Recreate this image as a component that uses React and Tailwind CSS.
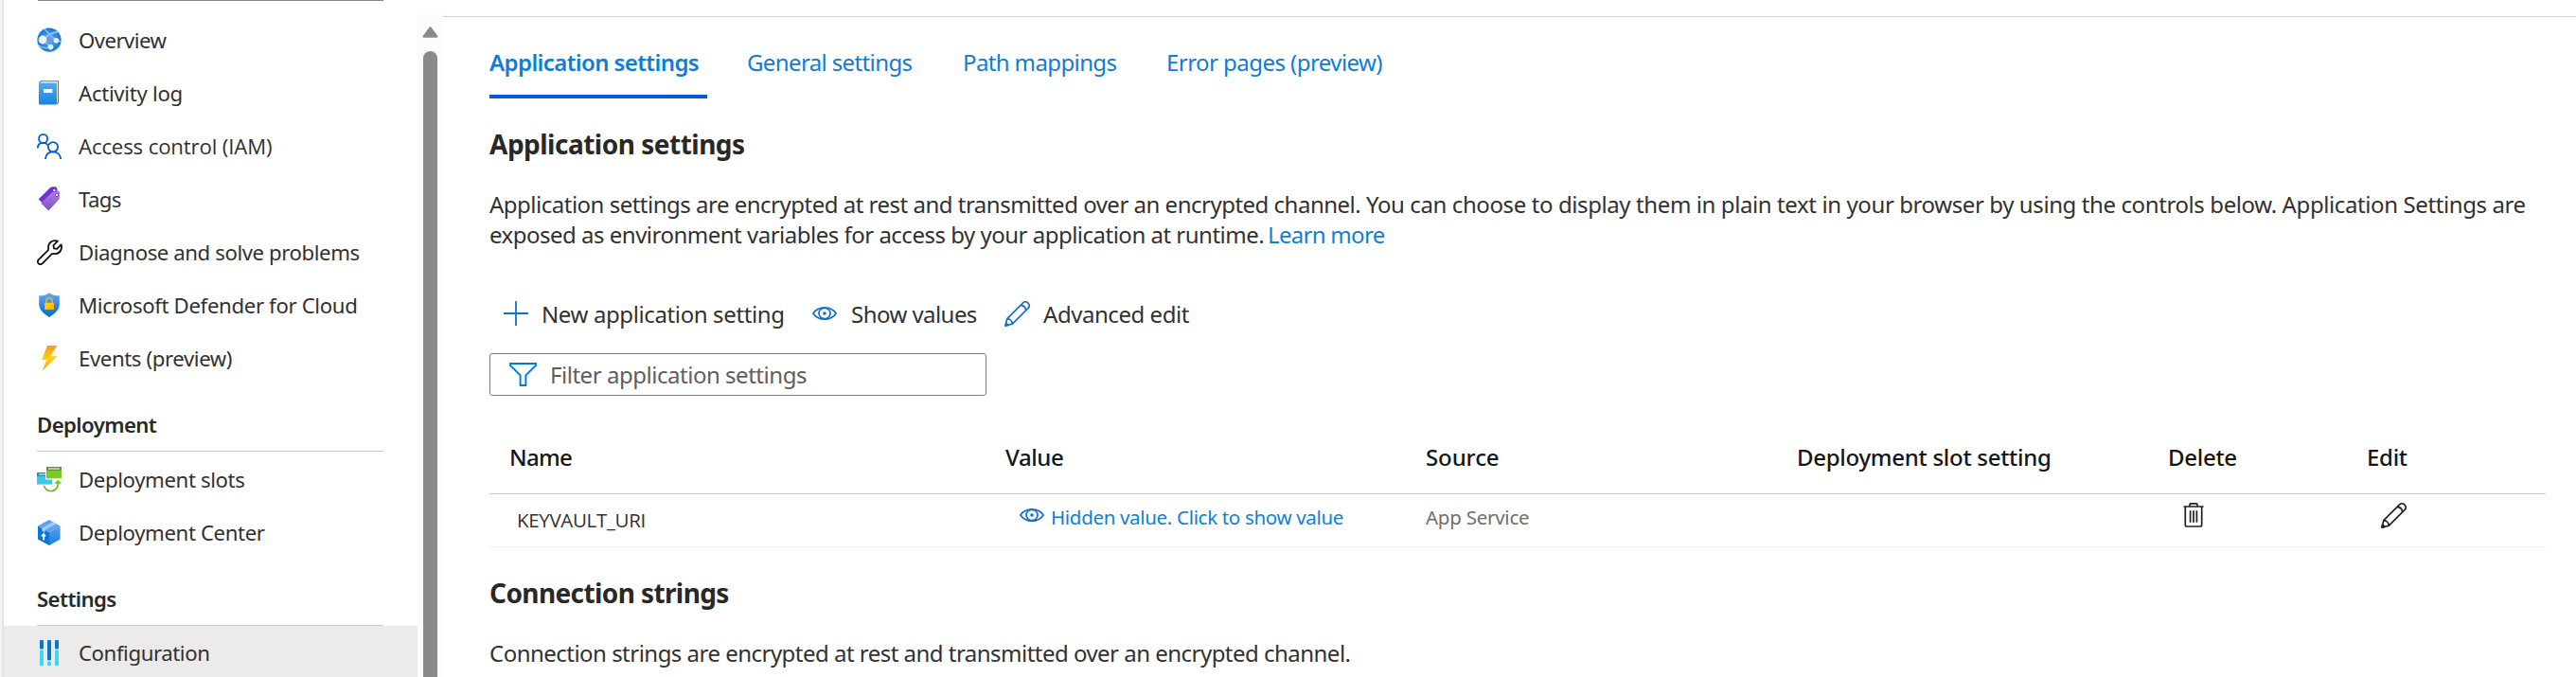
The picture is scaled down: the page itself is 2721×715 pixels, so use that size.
import { Fragment } from "react";

function GlobeIcon() {
  return (
    <svg width="26" height="26" viewBox="0 0 26 26">
      <defs>
        <radialGradient id="globe" cx="0.5" cy="0.5" r="0.55">
          <stop offset="0.2" stopColor="#5ea0ef" />
          <stop offset="1" stopColor="#0078d4" />
        </radialGradient>
        <clipPath id="globeClip"><circle cx="13" cy="13.2" r="12.6" /></clipPath>
      </defs>
      <circle cx="13" cy="13.2" r="12.6" fill="url(#globe)" />
      <g clipPath="url(#globeClip)" stroke="#8fbdf4" strokeWidth="1.4" fill="none">
        <path d="M8 1.5 L13.5 7.5 L20.5 14 L25 15" />
        <path d="M6 13 C10 9 15 6 22 4.5" strokeWidth="2.2" />
        <path d="M6 13 L14.5 20.5" />
        <path d="M2 19 C6 22 10 22.5 14.5 20.5" />
      </g>
      <circle cx="6" cy="13" r="4.4" fill="#f2f2f2" />
      <circle cx="20.4" cy="13.8" r="2.8" fill="#f2f2f2" />
      <circle cx="14.5" cy="20.6" r="2.8" fill="#f2f2f2" />
    </svg>
  );
}

function BookIcon() {
  return (
    <svg width="26" height="26" viewBox="0 0 26 26">
      <defs>
        <linearGradient id="book" x1="0" y1="0" x2="0" y2="1">
          <stop offset="0" stopColor="#50aaf0" />
          <stop offset="1" stopColor="#1585dc" />
        </linearGradient>
      </defs>
      <path d="M2.5 2.5 L4.5 0.8 H22.5 V23.5 L20.5 25.2" fill="#fff" stroke="#2a7fc4" strokeWidth="1.1" />
      <rect x="2" y="2.6" width="19" height="23" rx="1" fill="url(#book)" />
      <rect x="7" y="9" width="9.4" height="4" fill="#fff" />
    </svg>
  );
}

function PeopleIcon() {
  return (
    <svg width="26" height="27" viewBox="0 0 26 27" fill="none" stroke="#015cda" strokeWidth="1.8">
      <circle cx="6.6" cy="5.4" r="4.5" />
      <path d="M0.8 15.5 C0.8 11.8 3.3 9.9 6.6 9.9 C9 9.9 10.6 10.9 11.8 12.6" />
      <circle cx="17" cy="14.2" r="5.1" />
      <path d="M8.9 27 C9.4 22.2 12.6 19.4 17 19.4 C21.4 19.4 24.8 22.2 25.2 27" />
    </svg>
  );
}

function TagIcon() {
  return (
    <svg width="26" height="26" viewBox="0 0 26 26">
      <defs>
        <linearGradient id="tag" x1="0" y1="0" x2="0" y2="1">
          <stop offset="0" stopColor="#b77ee6" />
          <stop offset="1" stopColor="#7a50bb" />
        </linearGradient>
      </defs>
      <path d="M2 13 L14 1.2 Q15 0.4 16.5 0.3 L19.5 0.2 Q21.3 0.5 21.5 3 L21.5 5 L6 17.5 L2 13.8 Z" fill="#7430d8" />
      <path d="M4.6 17 L17.2 5 Q18.2 4.2 20 4.2 L22.5 4.4 Q24 4.6 24 6.2 L23.8 11.6 Q23.7 13.4 22.5 14.5 L12.2 25.4 L4.2 17.6 Z" fill="url(#tag)" />
      <circle cx="18.3" cy="4" r="1.7" fill="#fff" stroke="#5b1bb0" strokeWidth="0.9" />
      <circle cx="21" cy="8.9" r="1.7" fill="#fff" stroke="#6b3db5" strokeWidth="0.9" />
    </svg>
  );
}

function WrenchIcon() {
  return (
    <svg width="27" height="27" viewBox="1.4 1.4 21.2 21.2" fill="none" stroke="#111" strokeWidth="1.4" strokeLinejoin="round">
      <path d="M18.6 2.7 L15.1 6.2 L15.5 8.7 L18 9.1 L21.4 5.6 C22.6 8.6 21 12.9 16.9 13.2 C15.6 13.3 14.4 12.7 13.4 13.7 L6.1 21.2 C4.9 22.3 3.2 22.1 2.5 21.1 C1.8 20 2 18.8 2.9 17.9 L10.4 10.6 C11.4 9.6 10.7 8.5 10.9 7.1 C11.3 3.2 15.3 1.3 18.6 2.7 Z" />
    </svg>
  );
}

function ShieldIcon() {
  return (
    <svg width="26" height="26" viewBox="0 0 26 26">
      <defs>
        <linearGradient id="shield" x1="0" y1="0" x2="0" y2="1">
          <stop offset="0.1" stopColor="#5ea0ef" />
          <stop offset="0.9" stopColor="#0074d8" />
        </linearGradient>
      </defs>
      <path d="M13 0.2 C16 2.6 19.5 3.3 23.8 3.3 V12 C23.8 19 18 22.6 13 26 C8 22.6 2.2 19 2.2 12 V3.3 C6.5 3.3 10 2.6 13 0.2 Z" fill="url(#shield)" />
      <path d="M9.8 11 V9.4 A3.2 3.6 0 0 1 16.2 9.4 V11" fill="none" stroke="#e8b21a" strokeWidth="1.7" />
      <rect x="8.2" y="10.8" width="9.8" height="7.2" rx="0.8" fill="#ffca10" />
      <path d="M8.6 18 L18 10.9 V17.2 Q18 18 17.2 18 Z" fill="#f5b70b" />
    </svg>
  );
}

function BoltIcon() {
  return (
    <svg width="26" height="27" viewBox="0 0 26 27">
      <defs>
        <linearGradient id="bolt" x1="0" y1="0" x2="0" y2="1">
          <stop offset="0" stopColor="#fc9a1e" />
          <stop offset="0.5" stopColor="#ffd20a" />
          <stop offset="1" stopColor="#fba11d" />
        </linearGradient>
      </defs>
      <path d="M11 0 H21.4 L14.2 11.2 H21.4 L5.4 27 L10.2 15 H5 Z" fill="url(#bolt)" />
    </svg>
  );
}

function SlotsIcon() {
  return (
    <svg width="26" height="27" viewBox="0 0 26 27">
      <rect x="0" y="6" width="16" height="12.6" fill="#36cbe8" />
      <rect x="0" y="6" width="16" height="4" fill="#1b91b5" />
      <rect x="2" y="7.2" width="9" height="1.5" fill="#b5dbe7" />
      <rect x="9" y="0" width="17" height="13.5" fill="#fff" />
      <rect x="10" y="0" width="16" height="12.3" fill="#7dc92b" />
      <rect x="10" y="0" width="16" height="4" fill="#5e9624" />
      <rect x="12" y="1.2" width="12" height="1.7" fill="#c5d6b3" />
      <path d="M7.4 20 C9 24 12 26 15.5 25.6 C20 25 22.4 21.5 22.4 17.6" fill="none" stroke="#76bc2d" strokeWidth="1.8" />
      <path d="M18.4 17.8 L22.3 13.8 L26 17.8 Z" fill="#76bc2d" />
    </svg>
  );
}

function BoxIcon() {
  return (
    <svg width="26" height="27" viewBox="0 0 26 27">
      <defs>
        <linearGradient id="box" x1="0" y1="0" x2="0" y2="1">
          <stop offset="0" stopColor="#5ea0ef" />
          <stop offset="1" stopColor="#1580dc" />
        </linearGradient>
      </defs>
      <path d="M1 6.5 L13 13.2 V27 L1 20.4 Z" fill="#0078d4" />
      <path d="M24.6 6.5 L13 13.2 V27 L24.6 20.4 Z" fill="url(#box)" />
      <path d="M1 6.5 L12.8 0 L24.6 6.5 L13 13.2 Z" fill="#5ea0ef" />
      <path d="M5.4 8.8 L17 2.3 L20.4 4.2 L8.6 10.8 V13.6 L5.4 11.8 Z" fill="#a5cbf8" />
      <path d="M5 17.5 L7 15 L9 17.6 M7.2 16 V21.4" fill="none" stroke="#fff" strokeWidth="1.7" />
    </svg>
  );
}

function SlidersIcon() {
  return (
    <svg width="26" height="27" viewBox="0 0 26 27">
      <g fill="#0078d4">
        <rect x="3" y="0" width="4" height="9.4" rx="0.8" />
        <rect x="11" y="0" width="4" height="21.4" rx="0.8" />
        <rect x="19" y="0" width="4" height="9.4" rx="0.8" />
      </g>
      <g fill="#3fd6f3">
        <rect x="3" y="10.4" width="4" height="16.6" rx="0.8" />
        <rect x="11" y="22.8" width="4" height="4.2" rx="0.8" />
        <rect x="19" y="10.4" width="4" height="16.6" rx="0.8" />
      </g>
    </svg>
  );
}

function EyeIcon() {
  return (
    <svg width="26" height="14" viewBox="0 0 26 15" preserveAspectRatio="none" fill="none" stroke="#1470c6" strokeWidth="1.7">
      <path d="M0.9 7.5 C3.5 3.2 7.8 0.9 13 0.9 C18.2 0.9 22.5 3.2 25.1 7.5 C22.5 11.8 18.2 14.1 13 14.1 C7.8 14.1 3.5 11.8 0.9 7.5 Z" />
      <circle cx="13" cy="7.5" r="6" />
      <circle cx="13" cy="7.5" r="1.8" fill="#1470c6" stroke="none" />
    </svg>
  );
}

function PencilIcon() {
  return (
    <svg width="27" height="27" viewBox="0 0 27 27" fill="none" stroke="currentColor" strokeWidth="1.7" strokeLinejoin="round">
      <path d="M1 26 L2.8 18.6 L19.6 1.9 C21.2 0.4 23.4 0.6 24.9 2.1 C26.4 3.6 26.6 5.8 25.1 7.4 L8.4 24.2 Z" />
      <path d="M17.2 4.3 C20.2 4.6 22.4 6.8 22.7 9.8 M2.8 18.6 C5.8 18.8 8.2 21.2 8.4 24.2" />
      <path d="M1 26 L1.7 23 L4 25.3 Z" fill="currentColor" />
    </svg>
  );
}

function PlusIcon() {
  return (
    <svg width="26" height="26" viewBox="0 0 26 26" fill="none" stroke="#1470c6" strokeWidth="1.8">
      <path d="M13 0 V26 M0 13 H26" />
    </svg>
  );
}

function FunnelIcon() {
  return (
    <svg width="29" height="25" viewBox="0 0 29 25" fill="none" stroke="#0078d4" strokeWidth="1.9">
      <path d="M1 1 H28 V2.8 L17.4 13.4 V24 H11.6 V13.4 L1 2.8 Z" />
    </svg>
  );
}

function TrashIcon() {
  return (
    <svg width="22" height="26" viewBox="0 0 22 26" fill="none" stroke="#222" strokeWidth="1.7">
      <path d="M0.5 4 H21.5 M7 4 V2 Q7 0.9 8.1 0.9 H13.9 Q15 0.9 15 2 V4" />
      <path d="M2.3 4 V23.2 Q2.3 25 4 25 H18 Q19.7 25 19.7 23.2 V4" />
      <path d="M7.6 8.2 V20.8 M11 8.2 V20.8 M14.4 8.2 V20.8" />
    </svg>
  );
}

function NavItem({ icon, label, track, className = "" }) {
  return (
    <div className={"flex h-14 shrink-0 items-center pl-[35px] " + className}>
      <span className="mb-0.5 flex w-11 shrink-0">{icon}</span>
      <span className={"whitespace-nowrap text-[22.2px] leading-8 text-[#323130] " + track}>{label}</span>
    </div>
  );
}

function NavHeading({ label, className }) {
  return (
    <div className={"mr-9 ml-[35px] shrink-0 border-b border-[#c8c8c8] text-[22.2px] leading-8 font-semibold text-[#292827] tracking-[-0.6px] " + className}>
      {label}
    </div>
  );
}

function Sidebar() {
  return (
    <div className="flex h-full w-[468px] shrink-0">
      <div className="w-1 shrink-0 border-r-2 border-[#e4e4e4] bg-[#f3f3f3]" />
      <nav className="flex w-[437px] shrink-0 flex-col overflow-hidden">
        <div className="mb-3.5 ml-9 h-px w-[365px] shrink-0 bg-[#858585]" />
        <NavItem icon={<GlobeIcon />} label="Overview" track="tracking-[-0.55px]" />
        <NavItem icon={<BookIcon />} label="Activity log" track="tracking-[-0.3px]" />
        <NavItem icon={<PeopleIcon />} label="Access control (IAM)" track="font-['Open_Sans'] tracking-[-0.14px]" />
        <NavItem icon={<TagIcon />} label="Tags" track="tracking-[-0.6px]" />
        <NavItem icon={<WrenchIcon />} label="Diagnose and solve problems" track="tracking-[-0.42px]" />
        <NavItem icon={<ShieldIcon />} label="Microsoft Defender for Cloud" track="tracking-[-0.35px]" />
        <NavItem icon={<BoltIcon />} label="Events (preview)" track="tracking-[-0.4px]" />
        <NavHeading label="Deployment" className="mb-px h-[70px] pt-[26px]" />
        <NavItem icon={<SlotsIcon />} label="Deployment slots" track="tracking-[-0.38px]" className="pt-0.5" />
        <NavItem icon={<BoxIcon />} label="Deployment Center" track="tracking-[-0.38px]" className="pt-0.5" />
        <NavHeading label="Settings" className="h-[71px] pt-[27px]" />
        <NavItem icon={<SlidersIcon />} label="Configuration" track="tracking-[-0.42px]" className="bg-[#ecebe9] pt-0.5" />
      </nav>
      <div className="mt-3.5 flex w-[27px] shrink-0 flex-col items-center bg-[#fcfcfc] pr-px">
        <svg className="mt-3.5 shrink-0" width="17" height="12" viewBox="0 0 17 12">
          <path d="M8.5 1.5 L15.3 10.6 H1.7 Z" fill="#8a8a8a" stroke="#8a8a8a" strokeWidth="2.4" strokeLinejoin="round" />
        </svg>
        <div className="mt-3.5 w-[15px] grow rounded-t-full bg-[#8a8a8a]" />
      </div>
    </div>
  );
}

const tabs = [
  { label: "Application settings", className: "mr-[42px] w-[230px] border-b-4 border-[#015cda] font-semibold tracking-[-0.6px]" },
  { label: "General settings", className: "w-[228px] tracking-[-0.62px]" },
  { label: "Path mappings", className: "w-[215px] tracking-[-0.62px]" },
  { label: "Error pages (preview)", className: "tracking-[-0.55px]" },
];

const columns = [
  { label: "Name", className: "tracking-[-0.7px]" },
  { label: "Value", className: "tracking-[-0.4px]" },
  { label: "Source", className: "tracking-[-0.1px]" },
  { label: "Deployment slot setting", className: "tracking-[-0.28px]" },
  { label: "Delete", className: "tracking-[-0.3px]" },
  { label: "Edit", className: "tracking-[-0.3px]" },
];

const settings = [{ name: "KEYVAULT_URI", source: "App Service" }];

function SettingsTable() {
  return (
    <div className="w-[2172px]">
      <div className="grid h-[104px] grid-cols-[524px_444px_392px_392px_210px_1fr] items-end border-b border-[#c9ced4] pb-[22px] pl-[21px] leading-8 font-medium text-[#161616]">
        {columns.map((c) => (
          <span key={c.label} className={c.className}>{c.label}</span>
        ))}
      </div>
      {settings.map((s) => (
        <div key={s.name} className="grid h-14 grid-cols-[524px_444px_392px_392px_210px_1fr] items-start border-b border-[#f1f1f1] pl-[21px] text-[20.5px] leading-7">
          <span className="pt-[13px] pl-2 font-['Open_Sans'] tracking-[-0.32px] text-[#323130]">{s.name}</span>
          <span className="flex items-start pt-2.5 pl-[15px] text-[#0f7fd8]">
            <span className="mr-[7px] pt-[5px]"><EyeIcon /></span>
            <span className="tracking-[-0.32px]">Hidden value. Click to show value</span>
          </span>
          <span className="pt-2.5 tracking-[-0.25px] text-[#6e6e6e]">{s.source}</span>
          <span />
          <span className="pt-[9px] pl-4"><TrashIcon /></span>
          <span className="pt-[9px] pl-[15px] text-[#222]"><PencilIcon /></span>
        </div>
      ))}
    </div>
  );
}

function Main() {
  return (
    <main className="flex min-w-0 grow flex-col pt-[17px]">
      <div className="flex grow flex-col border-t border-[#cfcfcf] pl-[49px] text-2xl whitespace-nowrap text-[#323130]">
        <div className="flex pt-8 leading-8 text-[#0f7cd6]">
          {tabs.map((t) => (
            <div key={t.label} className={"h-[54px] " + t.className}>{t.label}</div>
          ))}
        </div>
        <h2 className="mt-[30px] text-[28px] leading-9 font-bold tracking-[-0.5px] text-[#292827]">Application settings</h2>
        <div className="mt-[30px] leading-[31.5px]">
          <div>
            <span className="tracking-[-0.5px]">Application settings are encrypted at rest and transmitted over an encrypted channel. </span>
            <span className="tracking-[-0.4px]">You can choose to display them in plain text in your browser by using the controls below. Application Settings are</span>
          </div>
          <div className="flex tracking-[-0.5px]">
            <span className="w-[822px]">exposed as environment variables for access by your application at runtime.</span>
            <a className="tracking-[-0.7px] text-[#0f7fd8]">Learn more</a>
          </div>
        </div>
        <div className="mt-[53px] flex h-8 items-center pl-[15px] leading-8">
          <span className="mr-3.5 mb-0.5"><PlusIcon /></span>
          <span className="w-[286px] tracking-[-0.38px]">New application setting</span>
          <span className="mr-[15px] mb-0.5"><EyeIcon /></span>
          <span className="w-[162px] tracking-[-0.55px]">Show values</span>
          <span className="mr-3.5 mb-0.5 text-[#1470c6]"><PencilIcon /></span>
          <span className="tracking-[-0.45px]">Advanced edit</span>
        </div>
        <div className="mt-[25px] flex h-[45px] w-[525px] shrink-0 items-center rounded-[3px] border border-[#7d7b79] pl-5 text-[#605e5c]">
          <span className="mr-3.5"><FunnelIcon /></span>
          <span className="leading-8 tracking-[-0.47px]">Filter application settings</span>
        </div>
        <SettingsTable />
        <h2 className="mt-[30px] text-[28px] leading-9 font-bold tracking-[-0.6px] text-[#292827]">Connection strings</h2>
        <p className="mt-[30px] leading-8 tracking-[-0.52px]">Connection strings are encrypted at rest and transmitted over an encrypted channel.</p>
      </div>
    </main>
  );
}

export default function App() {
  return (
    <div className="flex h-[715px] w-[2721px] overflow-hidden bg-white font-['Noto_Sans',sans-serif] [&_svg]:block">
      <Sidebar />
      <Main />
    </div>
  );
}
